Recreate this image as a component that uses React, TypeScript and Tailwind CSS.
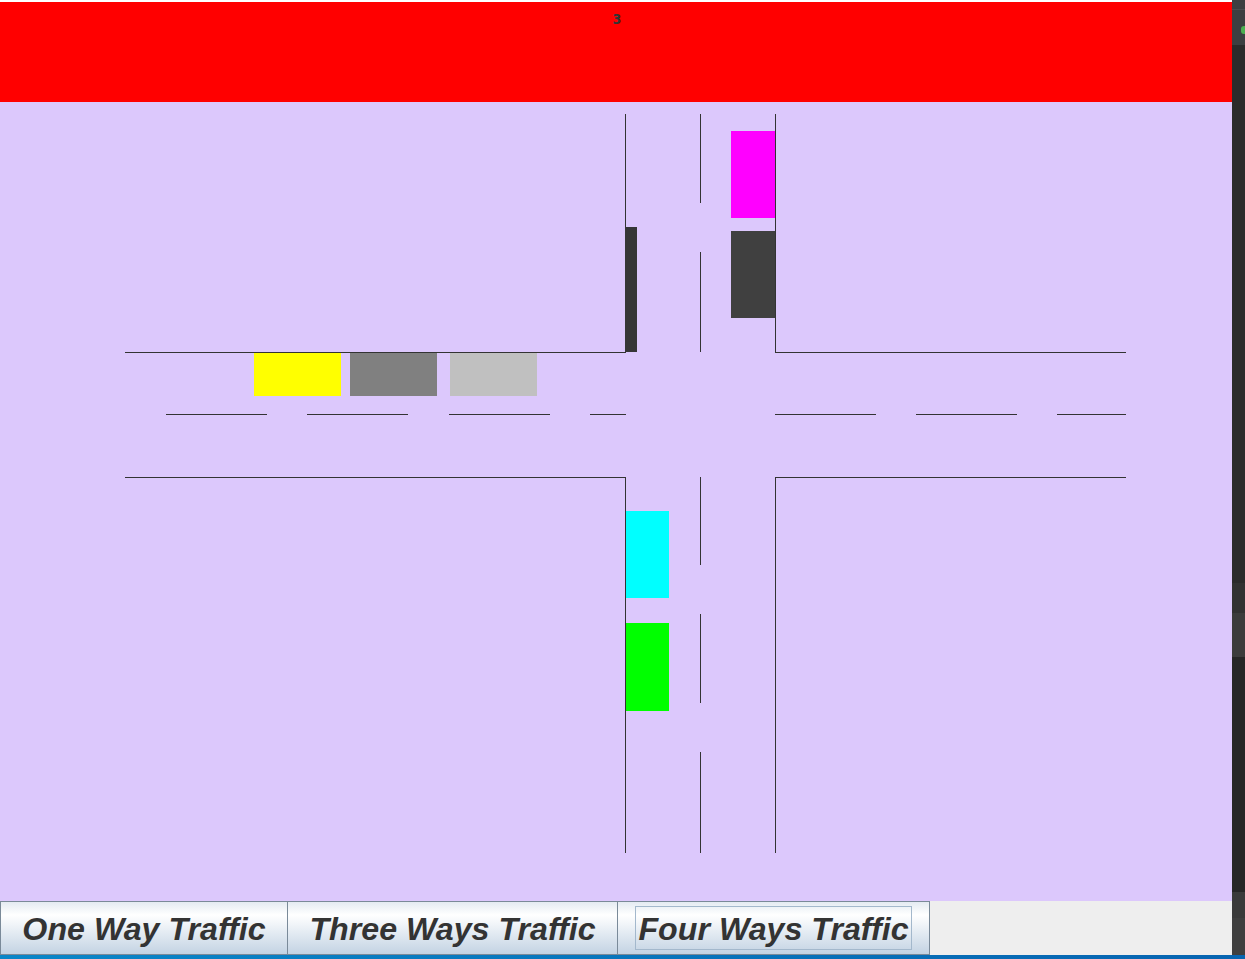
const LINE = "#333333";

const roadLines = [
  // north arm
  [625, 12, 1, 238],
  [775, 12, 1, 238],
  [700, 12, 1, 89],
  [700, 150, 1, 100],
  // west / east edges
  [125, 250, 501, 1],
  [775, 250, 351, 1],
  [125, 375, 501, 1],
  [775, 375, 351, 1],
  // south arm
  [625, 375, 1, 376],
  [775, 375, 1, 376],
  [700, 375, 1, 88],
  [700, 512, 1, 89],
  [700, 650, 1, 101],
];

const centerDashes = [
  [166, 101],
  [307, 101],
  [449, 101],
  [590, 36],
  [775, 101],
  [916, 101],
  [1057, 69],
];

const cars = [
  { x: 254, y: 251, w: 87, h: 43, c: "#ffff00" },
  { x: 350, y: 251, w: 87, h: 43, c: "#808080" },
  { x: 450, y: 251, w: 87, h: 43, c: "#c0c0c0" },
  { x: 625, y: 125, w: 12, h: 125, c: "#363636" },
  { x: 731, y: 29, w: 44, h: 87, c: "#ff00ff" },
  { x: 731, y: 129, w: 44, h: 87, c: "#404040" },
  { x: 626, y: 409, w: 43, h: 87, c: "#00ffff" },
  { x: 626, y: 521, w: 43, h: 88, c: "#00ff00" },
];

const Intersection = () => (
  <svg width="1232" height="799" viewBox="0 0 1232 799" shapeRendering="crispEdges" className="block">
    {roadLines.map(([x, y, w, h], i) => (
      <rect key={i} x={x} y={y} width={w} height={h} fill={LINE} />
    ))}
    {centerDashes.map(([x, w], i) => (
      <rect key={"d" + i} x={x} y={312} width={w} height={1} fill={LINE} />
    ))}
    {cars.map((car, i) => (
      <rect key={"c" + i} x={car.x} y={car.y} width={car.w} height={car.h} fill={car.c} />
    ))}
  </svg>
);

const btn =
  "h-full flex items-center justify-center pt-[2px] border-y border-l border-[#7a8a99] bg-linear-to-b from-[#e4ebf2] via-white via-25% to-[#c3d3e3] text-[32.2px] font-bold italic text-[#333333] leading-none";

export default function App() {
  return (
    <div className="w-[1245px] h-[959px] flex flex-col overflow-hidden font-['Liberation_Sans',Arial,sans-serif]">
      <div className="flex flex-1 min-h-0">
        <div className="w-[1232px] flex flex-col">
          <div className="h-[2px] bg-white" />
          <div className="h-[100px] bg-[#ff0000] flex justify-center">
            <span className="mt-[10px] ml-[2px] text-[14px] font-bold text-[#333333] leading-none font-['DejaVu_Sans_Condensed','DejaVu_Sans',sans-serif]">3</span>
          </div>
          <div className="h-[799px] bg-[#dcc8fc]">
            <Intersection />
          </div>
          <div className="h-[54px] flex bg-[#eeeeee]">
            <button className={btn + " w-[287px]"}>One Way Traffic</button>
            <button className={btn + " w-[330px]"}>Three Ways Traffic</button>
            <button className={btn + " w-[313px] border-r"}>
              <span className="h-[44px] px-[2px] -mt-[2px] flex items-center pt-[2px] border border-[#a3b8cc]">Four Ways Traffic</span>
            </button>
          </div>
        </div>
        <div className="w-[13px] flex flex-col bg-[#2b2b2b]">
          <div className="h-[10px] bg-[#3c3f41] border-b border-[#4a4d50]" />
          <div className="h-[35px] bg-[#3c3f41] relative">
            <span className="absolute left-[9px] top-[16px] w-[6px] h-[8px] rounded-full bg-[#4caf50]" />
          </div>
          <div className="h-[538px] bg-[#2b2b2b]" />
          <div className="h-[30px] bg-[#323232]" />
          <div className="h-[44px] bg-[#3c3c3c]" />
          <div className="h-[235px] bg-[#262626]" />
          <div className="h-[26px] bg-[#3a3a3a]" />
          <div className="flex-1 bg-[#3f3f3f]" />
        </div>
      </div>
      <div className="h-[4px] bg-linear-to-r from-[#0a86c8] to-[#0764b0]" />
    </div>
  );
}
